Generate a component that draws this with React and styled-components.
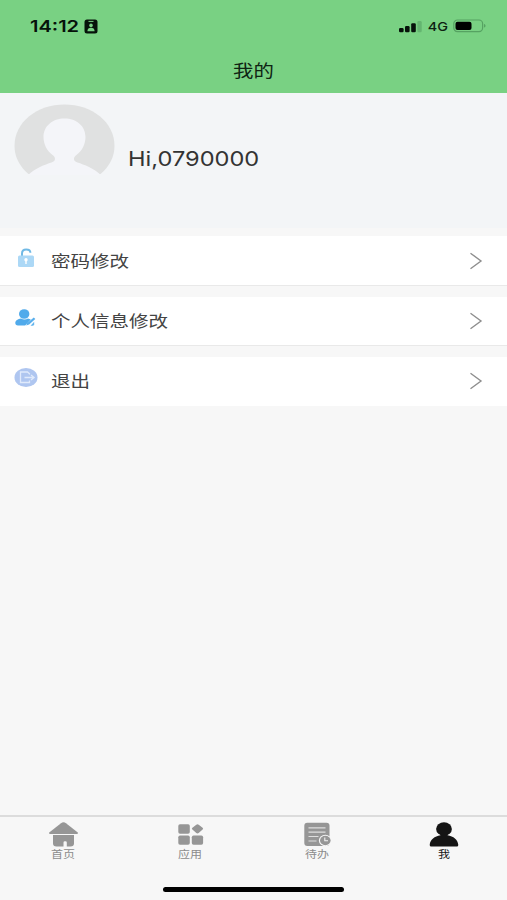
import React from 'react'
import styled, { createGlobalStyle } from 'styled-components'

const menu = [
  { label: '密码修改', Icon: LockIcon },
  { label: '个人信息修改', Icon: EditUserIcon },
  { label: '退出', Icon: LogoutIcon },
]

const tabs = [
  { label: '首页', Icon: HomeIcon },
  { label: '应用', Icon: AppsIcon },
  { label: '待办', Icon: TodoIcon },
  { label: '我', Icon: MeIcon, active: true },
]

export default function App() {
  return (
    <Screen>
      <GlobalStyle />
      <Header>
        <StatusBar>
          <StatusLeft>
            <Clock>14:12</Clock>
            <BadgeIcon />
          </StatusLeft>
          <StatusRight>
            <SignalIcon />
            <Network>4G</Network>
            <BatteryIcon />
          </StatusRight>
        </StatusBar>
        <Title>我的</Title>
      </Header>
      <Profile>
        <AvatarIcon />
        <Greeting>Hi,0790000</Greeting>
      </Profile>
      <Menu>
        {menu.map(({ label, Icon }) => (
          <MenuItem key={label}>
            <IconSlot>
              <Icon />
            </IconSlot>
            <MenuLabel>{label}</MenuLabel>
            <ArrowIcon />
          </MenuItem>
        ))}
      </Menu>
      <TabBar>
        {tabs.map(({ label, Icon, active }) => (
          <Tab key={label} $active={active}>
            <Icon />
            <TabLabel>{label}</TabLabel>
          </Tab>
        ))}
      </TabBar>
      <HomeArea>
        <HomeIndicator />
      </HomeArea>
    </Screen>
  )
}

function BadgeIcon() {
  return (
    <svg width='14' height='15' viewBox='0 0 14 15'>
      <rect x='0.5' y='0.5' width='13' height='14' rx='2.5' fill='#06120a' />
      <path d='M4.5 2.4h5' stroke='#79d183' strokeWidth='1' />
      <circle cx='7' cy='6.4' r='1.8' fill='#79d183' />
      <path d='M3.4 12.2c0-2.500 1.400-3.500 3.600-3.500s3.600 1 3.600 3.500z' fill='#79d183' />
    </svg>
  )
}

function SignalIcon() {
  return (
    <svg width='24' height='13' viewBox='0 0 24 13'>
      <rect x='0' y='8' width='4.6' height='4.3' rx='1.2' fill='#06120a' />
      <rect x='6' y='6' width='4.6' height='6.3' rx='1.2' fill='#06120a' />
      <rect x='12.2' y='3.3' width='4.6' height='9' rx='1.2' fill='#06120a' />
      <rect x='18.4' y='1' width='4.3' height='11.3' rx='1.2' fill='#64b570' />
    </svg>
  )
}

function BatteryIcon() {
  return (
    <svg width='34' height='14' viewBox='0 0 34 14'>
      <rect x='0.8' y='1' width='28.8' height='11.6' rx='3.6' fill='none' stroke='#56a262' strokeWidth='1.2' />
      <rect x='2.5' y='2.7' width='16' height='8.2' rx='2' fill='#000' />
      <path d='M31 5c2 .5 2 3.100 0 3.600z' fill='#56a262' />
    </svg>
  )
}

function AvatarIcon() {
  return (
    <svg width='101' height='71' viewBox='0 0 101 71'>
      <path
        d='M14.500 70C5 62 .5 52 .5 42 .5 18 23 .5 50.500.5S100.500 18 100.500 42c0 10-4.500 20-14 28z'
        fill='#e0e1e1'
      />
      <path
        d='M14 71C21 64.500 31 60.500 37.500 58.500c5-1.500 4-5.500 1-7.500C33 47 29.500 40 29.500 33c0-11 9-18.500 21-18.500s21 7.500 21 18.500c0 7-3.500 14-9 18-3 2-4 6 1 7.500C70 60.500 80 64.500 87 71z'
        fill='#f4f5f9'
      />
    </svg>
  )
}

function LockIcon() {
  return (
    <svg width='24' height='20' viewBox='0 0 24 20'>
      <path d='M8 9V5.500C8 3 9.500 1.500 12.200 1.500c2.500 0 4.200 1.100 4.200 3.300' fill='none' stroke='#70b9e5' strokeWidth='2' />
      <rect x='4' y='7.600' width='16' height='11.400' rx='1.500' fill='#acd8f6' />
      <circle cx='12' cy='11.800' r='1.700' fill='#fff' />
      <path d='M12 12v4' stroke='#fff' strokeWidth='1.400' />
    </svg>
  )
}

function EditUserIcon() {
  return (
    <svg width='24' height='20' viewBox='0 0 24 20'>
      <ellipse cx='10.200' cy='6' rx='5.200' ry='4.800' fill='#50aaeb' />
      <path d='M1.300 15c0-2.800 2.700-4.200 5.700-4.600 2 1.300 5 1.300 7 0l2.800 1-5.600 6.100H4c-1.800 0-2.700-1-2.700-2.500z' fill='#50aaeb' />
      <path d='M12.200 17.600l1-2.500 6.600-5.600 1.500 1.400-6.200 5.700z' fill='#58aeec' />
      <path d='M16.500 17.700l3.700-4v2.600q0 1.400-1.400 1.400z' fill='#65b6ee' />
    </svg>
  )
}

function LogoutIcon() {
  return (
    <svg width='24' height='20' viewBox='0 0 24 20'>
      <ellipse cx='12' cy='9.500' rx='11.500' ry='9.500' fill='#afc6f0' />
      <path d='M15.500 6.600V5.800L13.500 4H6.500v10.500h9v-2' fill='none' stroke='#e0eafb' strokeWidth='1.300' />
      <path d='M10.500 9.500h9M17 6.900l3.100 2.600-3.100 2.600' fill='none' stroke='#e0eafb' strokeWidth='1.300' />
    </svg>
  )
}

function ArrowIcon() {
  return (
    <svg width='14' height='18' viewBox='0 0 14 18'>
      <path d='M1.500 1.200l10.500 7.800L1.500 16.800' fill='none' stroke='#8e8e8e' strokeWidth='1.400' />
    </svg>
  )
}

function HomeIcon() {
  return (
    <svg width='30' height='26' viewBox='0 0 30 26'>
      <path d='M1.200 11.600L13 2.200q2.500-1.800 5 0L29.800 11.600q.4 1.200-.8 1.400H2Q.8 12.800 1.200 11.600z' fill='#969696' />
      <path d='M5 14h21v8.500q0 3-3.500 3h-3.700v-4q0-1.300-1.300-1.300h-.7q-1.300 0-1.300 1.300v4H8.500q-3.500 0-3.500-3z' fill='#969696' />
    </svg>
  )
}

function AppsIcon() {
  return (
    <svg width='30' height='26' viewBox='0 0 30 26'>
      <rect x='3.300' y='3.300' width='11.500' height='9.400' rx='1.700' fill='#969696' />
      <rect x='3.300' y='14.500' width='11.500' height='9.200' rx='1.700' fill='#969696' />
      <rect x='16.800' y='14.500' width='11.300' height='9.200' rx='1.700' fill='#969696' />
      <path d='M21.300 3.700q1.200-.9 2.400 0l3.900 3.100q1.100.9 0 1.800l-3.900 3.400q-1.200.9-2.400 0l-3.900-3.400q-1.100-.9 0-1.800z' fill='#969696' />
    </svg>
  )
}

function TodoIcon() {
  return (
    <svg width='30' height='26' viewBox='0 0 30 26'>
      <rect x='2.300' y='1.700' width='25.200' height='23.300' rx='3' fill='#969696' />
      <path d='M6.500 6.800h17M6.500 11.200h17M6.500 15.500h10M6.500 20h8' stroke='#dedede' strokeWidth='1.200' />
      <ellipse cx='23.300' cy='19.500' rx='6.400' ry='5.800' fill='#f7f7f7' />
      <ellipse cx='23.300' cy='19.500' rx='5.300' ry='4.700' fill='#969696' />
      <path d='M22.800 16.600v3.200h3.200' fill='none' stroke='#f2f2f2' strokeWidth='1.100' />
    </svg>
  )
}

function MeIcon() {
  return (
    <svg width='30' height='26' viewBox='0 0 30 26'>
      <ellipse cx='15' cy='7.900' rx='7.900' ry='6.700' fill='#151515' />
      <path d='M11.500 12h7v2.200c6 1 10.300 4.300 10.800 9.800q0 1.500-1.500 1.500H2.200Q.7 25.500.7 24c.5-5.500 4.800-8.800 10.800-9.800z' fill='#151515' />
    </svg>
  )
}

const GlobalStyle = createGlobalStyle`
  * {
    box-sizing: border-box;
  }

  body {
    margin: 0;
    background: #f7f7f7;
    font-family: Inter, 'Noto Sans CJK SC', sans-serif;
  }

  svg {
    display: block;
    flex-shrink: 0;
  }
`

const Screen = styled.div`
  display: flex;
  flex-direction: column;
  width: 100%;
  height: 900px;
  overflow: hidden;
  background: #f7f7f7;
`

const Header = styled.header`
  height: 93px;
  background: #79d183;
`

const StatusBar = styled.div`
  display: flex;
  justify-content: space-between;
  height: 52px;
  padding: 0 20px 0 30px;
`

const StatusLeft = styled.div`
  display: flex;
  align-items: center;
`

const StatusRight = styled(StatusLeft)``

const Clock = styled.div`
  width: 54px;
  font-size: 16px;
  font-weight: 600;
  line-height: 20px;
  color: #06120a;
  transform: scaleX(1.25);
  transform-origin: left;
`

const Network = styled.div`
  width: 30px;
  padding: 1px 0 0 4px;
  font-size: 12px;
  font-weight: 500;
  line-height: 16px;
  color: #0d2212;
  transform: scaleX(1.2);
  transform-origin: left;
`

const Title = styled.h1`
  margin: 7px 0 0;
  font-size: 17px;
  font-weight: 400;
  line-height: 24px;
  text-align: center;
  color: #0f2413;
  transform: scaleX(1.2);
`

const Profile = styled.section`
  display: flex;
  align-items: flex-start;
  height: 135px;
  padding: 11px 14px;
  background: #f3f5f7;
`

const Greeting = styled.div`
  margin: 42px 0 0 13px;
  font-size: 20px;
  line-height: 26px;
  color: #333;
  transform: scaleX(1.18);
  transform-origin: left;
`

const Menu = styled.ul`
  display: flex;
  flex: 1;
  flex-direction: column;
  gap: 11px;
  margin: 0;
  padding: 8px 0 0;
  list-style: none;
`

const MenuItem = styled.li`
  display: flex;
  align-items: center;
  height: 49.5px;
  padding: 0 24px 0 14px;
  border-bottom: 1px solid #e9e9e9;
  background: #fff;

  &:first-child {
    padding-top: 2px;
  }

  &:last-child {
    border-color: #f7f7f7;
  }
`

const IconSlot = styled.div`
  width: 37px;
  margin-bottom: 6px;
`

const MenuLabel = styled.div`
  flex: 1;
  font-size: 16px;
  line-height: 24px;
  color: #444;
  transform: scaleX(1.22);
  transform-origin: left;
`

const TabBar = styled.nav`
  display: flex;
  height: 62px;
  padding-top: 4px;
  border-top: 2px solid #dcdcdc;
`

const Tab = styled.div`
  display: flex;
  flex: 1;
  flex-direction: column;
  align-items: center;
  color: ${({ $active }) => ($active ? '#151515' : '#8c8c8c')};
`

const TabLabel = styled.span`
  font-size: 10px;
  line-height: 14px;
  transform: scaleX(1.2);
`

const HomeArea = styled.div`
  display: flex;
  justify-content: center;
  height: 23px;
  padding-top: 10px;
`

const HomeIndicator = styled.div`
  width: 181px;
  height: 5px;
  border-radius: 3px;
  background: #000;
`
